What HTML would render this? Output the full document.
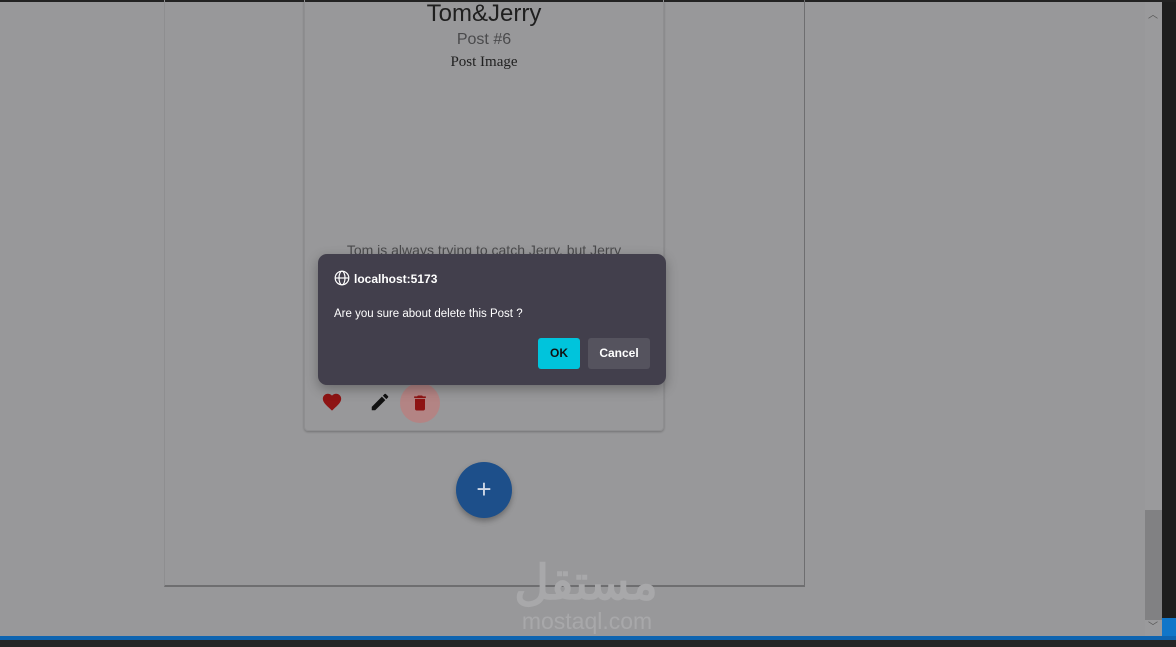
<!DOCTYPE html>
<html><head><meta charset="utf-8"><style>
*{margin:0;padding:0;box-sizing:border-box}
body{width:1176px;height:647px;overflow:hidden;background:#98989a;position:relative;font-family:"Liberation Sans",sans-serif}
.abs{position:absolute}
</style></head><body>
<div class="abs" style="left:0;top:0;width:1176px;height:2px;background:#222"></div>
<div class="abs" style="left:164px;top:0;width:641px;height:587px;border-right:1px solid #6e6e70;border-bottom:2px solid #6e6e70;border-left:1px solid #8e8e90"></div>
<div class="abs" style="left:304px;top:0;width:360px;height:431px;border:1px solid #8e8e90;border-top:none;border-radius:0 0 4px 4px;box-shadow:0 1px 2px rgba(0,0,0,.25)"></div>
<div class="abs" style="left:304px;top:0;width:360px;text-align:center;font-size:24px;color:#1f1f1f">Tom&amp;Jerry</div>
<div class="abs" style="left:304px;top:31px;width:360px;text-align:center;font-size:16px;color:#4a4a4c">Post #6</div>
<div class="abs" style="left:304px;top:54px;width:360px;text-align:center;font-size:15px;color:#1f1f1f;font-family:'Liberation Serif',serif">Post Image</div>
<div class="abs" style="left:304px;top:242px;width:360px;text-align:center;font-size:14px;color:#4a4a4c;height:12px;overflow:hidden">Tom is always trying to catch Jerry, but Jerry</div>
<svg class="abs" style="left:320px;top:391px" width="24" height="22" viewBox="0 0 24 24"><path fill="#8e1414" d="M12 21.35l-1.45-1.32C5.4 15.36 2 12.280 2 8.5 2 5.42 4.42 3 7.5 3c1.74 0 3.41.81 4.5 2.090C13.09 3.81 14.76 3 16.5 3 19.58 3 22 5.42 22 8.5c0 3.78-3.4 6.86-8.55 11.54z"/></svg>
<svg class="abs" style="left:369px;top:391px" width="22" height="22" viewBox="0 0 24 24"><path fill="#111" d="M3 17.25V21h3.75L17.81 9.94l-3.75-3.75zM20.71 7.04a1 1 0 000-1.41l-2.34-2.34a1 1 0 00-1.41 0l-1.83 1.83 3.75 3.75z"/></svg>
<div class="abs" style="left:400px;top:383px;width:40px;height:40px;border-radius:50%;background:#b38484"></div>
<svg class="abs" style="left:410px;top:392px" width="20" height="22" viewBox="0 0 24 24"><path fill="#8e1414" d="M6 19c0 1.1.9 2 2 2h8c1.1 0 2-.9 2-2V7H6zM19 4h-3.5l-1-1h-5l-1 1H5v2h14z"/></svg>
<div class="abs" style="left:456px;top:462px;width:56px;height:56px;border-radius:50%;background:#1d4f8a;box-shadow:0 3px 6px rgba(0,0,0,.3);color:#cfd8e6;font-size:26px;text-align:center;line-height:54px">+</div>
<div class="abs" style="left:318px;top:254px;width:348px;height:131px;background:#423f4c;border-radius:9px;box-shadow:0 4px 12px rgba(0,0,0,.3)"></div>
<svg class="abs" style="left:334px;top:270px" width="16" height="16" viewBox="0 0 16 16" fill="none" stroke="#fff" stroke-width="1.2"><circle cx="8" cy="8" r="6.8"/><ellipse cx="8" cy="8" rx="3" ry="6.8"/><path d="M1.2 8h13.6"/></svg>
<div class="abs" style="left:354px;top:272px;font-size:12px;font-weight:bold;color:#fff">localhost:5173</div>
<div class="abs" style="left:334px;top:308px;font-size:11.5px;color:#fff">Are you sure about delete this Post ?</div>
<div class="abs" style="left:538px;top:338px;width:42px;height:31px;background:#00c4dc;border-radius:3px;font-size:12px;font-weight:bold;color:#111;text-align:center;line-height:31px">OK</div>
<div class="abs" style="left:588px;top:338px;width:62px;height:31px;background:#55535e;border-radius:3px;font-size:12px;font-weight:bold;color:#fff;text-align:center;line-height:31px">Cancel</div>
<div class="abs" style="left:512px;top:554px;width:148px;text-align:center;font-size:48px;font-weight:bold;color:#a8a8aa;line-height:60px">مستقل</div>
<div class="abs" style="left:514px;top:608px;width:146px;text-align:center;font-size:23px;color:#a8a8aa">mostaql.com</div>
<div class="abs" style="left:1145px;top:2px;width:17px;height:634px;background:#9a9a9c"></div>
<div class="abs" style="left:1145px;top:510px;width:17px;height:110px;background:#818183"></div>
<div class="abs" style="left:1148px;top:6px;font-size:10px;color:#555">︿</div>
<div class="abs" style="left:1148px;top:618px;font-size:10px;color:#555">﹀</div>
<div class="abs" style="left:1162px;top:2px;width:14px;height:634px;background:#1e1e1e"></div>
<div class="abs" style="left:1162px;top:618px;width:14px;height:18px;background:#1076c9"></div>
<div class="abs" style="left:0;top:636px;width:1176px;height:4px;background:#0e64b0"></div>
<div class="abs" style="left:0;top:640px;width:1176px;height:7px;background:#252526"></div>
</body></html>
